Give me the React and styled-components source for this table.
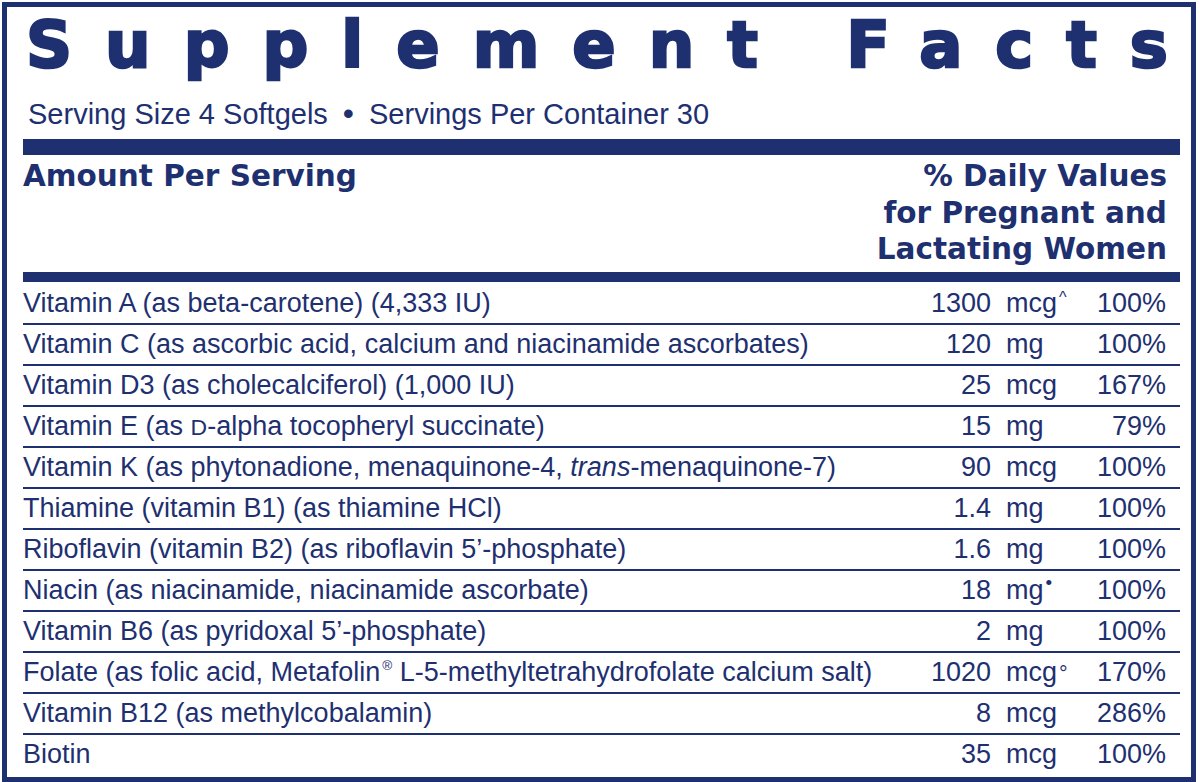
import React from 'react';
import styled, { createGlobalStyle } from 'styled-components';

const navy = '#1e3070';

const GlobalStyle = createGlobalStyle`
  html, body {
    margin: 0;
    padding: 0;
    background: #ffffff;
  }
  body {
    font-family: 'Liberation Sans', Arial, sans-serif;
    color: ${navy};
  }
`;

const Label = styled.section`
  box-sizing: border-box;
  width: 1194px;
  height: 780px;
  margin: 2px 0 0 2px;
  border: 5px solid ${navy};
  padding: 5px 11px 0 16px;
  background: #ffffff;
`;

const Title = styled.h1`
  margin: 0;
  padding-left: 3px;
  font-family: 'DejaVu Sans', Verdana, sans-serif;
  font-weight: bold;
  font-size: 64px;
  line-height: 66px;
  letter-spacing: 33px;
  white-space: nowrap;
  color: ${navy};
  -webkit-text-stroke: 2.5px ${navy};
`;

const LastLetter = styled.span`
  letter-spacing: 0;
`;

const Serving = styled.p`
  margin: 19px 0 0 5px;
  font-size: 29px;
  line-height: 32px;
  white-space: nowrap;
`;

const Bullet = styled.span`
  margin: 0 15px 0 15px;
  font-size: 1.1em;
`;

const Bar = styled.div`
  height: ${(props) => props.thickness}px;
  margin-top: ${(props) => props.offset || 0}px;
  background: ${navy};
`;

const HeadRow = styled.div`
  display: flex;
  justify-content: space-between;
  align-items: flex-start;
  padding: 3px 13px 4px 0;
  font-family: 'DejaVu Sans', Verdana, sans-serif;
  font-weight: bold;
  font-size: 29.5px;
  line-height: 36.5px;
`;

const HeadRight = styled.div`
  text-align: right;
`;

const Rows = styled.div`
  margin-top: 2px;
`;

const Row = styled.div`
  display: grid;
  grid-template-columns: 1fr 95px 70px 90px;
  height: 39px;
  padding-right: 14px;
  border-bottom: ${(props) => (props.last ? 'none' : `2px solid ${navy}`)};
  font-size: 27px;
  line-height: 39px;
  white-space: nowrap;
`;

const Name = styled.div`
  overflow: visible;
`;

const Amount = styled.div`
  text-align: right;
  padding-right: 15px;
`;

const Unit = styled.div`
  text-align: left;
`;

const Percent = styled.div`
  text-align: right;
`;

const Mark = styled.span`
  font-size: ${(props) => props.size || 0.5}em;
  vertical-align: ${(props) => props.lift || 0}em;
  line-height: 0;
  margin-left: 2px;
`;

const SmallCap = styled.span`
  font-size: 0.85em;
`;

const nutrients = [
  {
    name: 'Vitamin A (as beta-carotene) (4,333 IU)',
    amount: '1300',
    unit: 'mcg',
    mark: { glyph: '^', size: 0.6, lift: 0.55 },
    dv: '100%',
  },
  {
    name: 'Vitamin C (as ascorbic acid, calcium and niacinamide ascorbates)',
    amount: '120',
    unit: 'mg',
    dv: '100%',
  },
  {
    name: 'Vitamin D3 (as cholecalciferol) (1,000 IU)',
    amount: '25',
    unit: 'mcg',
    dv: '167%',
  },
  {
    name: (
      <>
        Vitamin E (as <SmallCap>D</SmallCap>-alpha tocopheryl succinate)
      </>
    ),
    amount: '15',
    unit: 'mg',
    dv: '79%',
  },
  {
    name: (
      <>
        Vitamin K (as phytonadione, menaquinone-4, <i>trans</i>-menaquinone-7)
      </>
    ),
    amount: '90',
    unit: 'mcg',
    dv: '100%',
  },
  {
    name: 'Thiamine (vitamin B1) (as thiamine HCl)',
    amount: '1.4',
    unit: 'mg',
    dv: '100%',
  },
  {
    name: 'Riboflavin (vitamin B2) (as riboflavin 5\u2019-phosphate)',
    amount: '1.6',
    unit: 'mg',
    dv: '100%',
  },
  {
    name: 'Niacin (as niacinamide, niacinamide ascorbate)',
    amount: '18',
    unit: 'mg',
    mark: { glyph: '\u2022', size: 0.7, lift: 0.5 },
    dv: '100%',
  },
  {
    name: 'Vitamin B6 (as pyridoxal 5\u2019-phosphate)',
    amount: '2',
    unit: 'mg',
    dv: '100%',
  },
  {
    name: (
      <>
        Folate (as folic acid, Metafolin
        <Mark size={0.5} lift={0.75}>
          ®
        </Mark>{' '}
        L-5-methyltetrahydrofolate calcium salt)
      </>
    ),
    amount: '1020',
    unit: 'mcg',
    mark: { glyph: '°', size: 0.8, lift: 0 },
    dv: '170%',
  },
  {
    name: 'Vitamin B12 (as methylcobalamin)',
    amount: '8',
    unit: 'mcg',
    dv: '286%',
  },
  {
    name: 'Biotin',
    amount: '35',
    unit: 'mcg',
    dv: '100%',
  },
];

const App = () => {
  return (
    <>
      <GlobalStyle />
      <Label>
        <Title>
          Supplement Fact<LastLetter>s</LastLetter>
        </Title>
        <Serving>
          Serving Size 4 Softgels<Bullet>•</Bullet>Servings Per Container 30
        </Serving>
        <Bar thickness={16} offset={9} />
        <HeadRow>
          <div>Amount Per Serving</div>
          <HeadRight>
            % Daily Values
            <br />
            for Pregnant and
            <br />
            Lactating Women
          </HeadRight>
        </HeadRow>
        <Bar thickness={10} />
        <Rows>
          {nutrients.map((item, i) => (
            <Row key={i} last={i === nutrients.length - 1}>
              <Name>{item.name}</Name>
              <Amount>{item.amount}</Amount>
              <Unit>
                {item.unit}
                {item.mark && (
                  <Mark size={item.mark.size} lift={item.mark.lift}>
                    {item.mark.glyph}
                  </Mark>
                )}
              </Unit>
              <Percent>{item.dv}</Percent>
            </Row>
          ))}
        </Rows>
      </Label>
    </>
  );
};

export default App;
